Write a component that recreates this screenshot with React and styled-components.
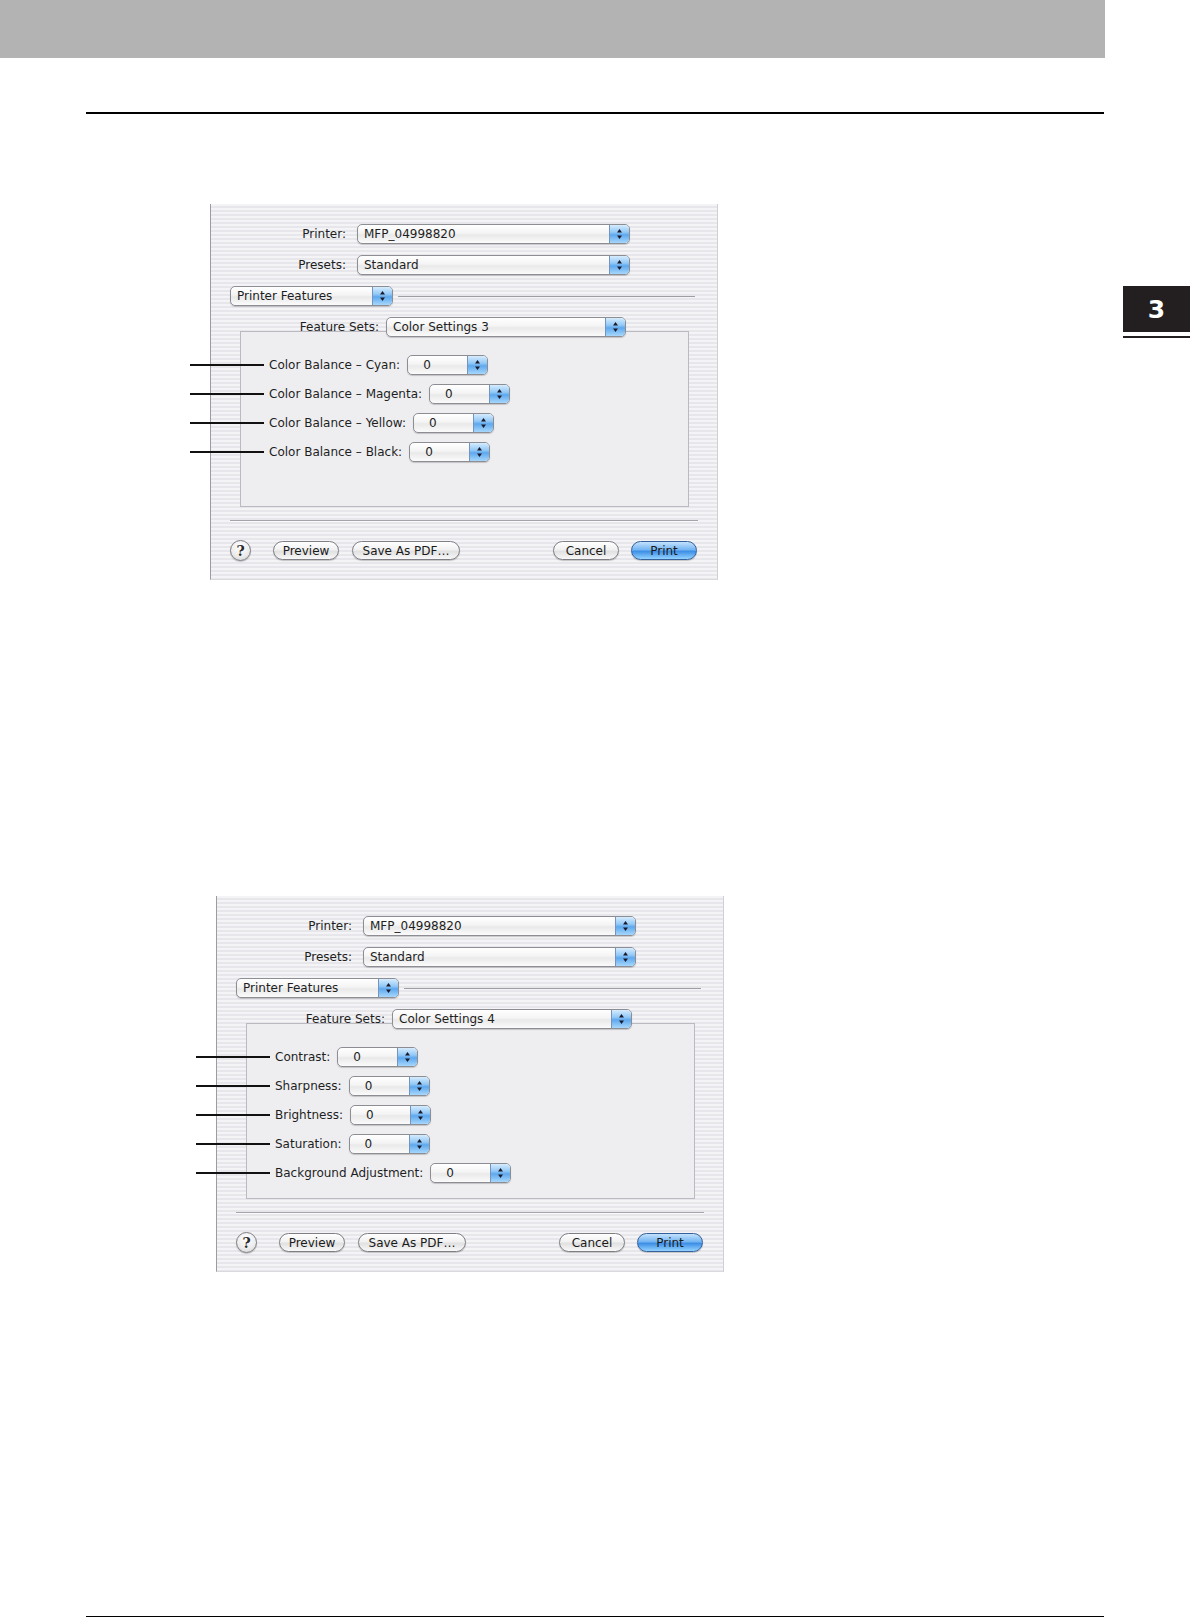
import React from 'react';
import styled, { createGlobalStyle } from 'styled-components';

const GlobalStyle = createGlobalStyle`
  html, body {
    margin: 0;
    padding: 0;
    background: #ffffff;
  }
  body {
    font-family: 'DejaVu Sans', 'Liberation Sans', sans-serif;
  }
`;

const Page = styled.div`
  width: 1190px;
  height: 1617px;
  display: grid;
  grid-template-columns: 1105px 1fr;
  overflow: hidden;
`;

const Content = styled.div`
  display: flex;
  flex-direction: column;
`;

const HeaderBand = styled.div`
  height: 58px;
  background-color: #b3b3b3;
`;

const Rule = styled.div`
  margin-top: ${p => p.$top}px;
  margin-left: 86px;
  width: 1018px;
  height: 2px;
  background-color: #000;
`;

const Side = styled.div`
  padding-top: 286px;
  padding-left: 18px;
`;

const ChapterTab = styled.div`
  width: 67px;
  height: 46px;
  background-color: #231f20;
  color: #fff;
  display: flex;
  align-items: center;
  justify-content: center;
  font-family: 'DejaVu Sans', sans-serif;
  font-weight: bold;
  font-size: 25px;
`;

const ChapterLine = styled.div`
  margin-top: 4px;
  width: 67px;
  height: 2px;
  background-color: #231f20;
`;

const Dialog = styled.div`
  margin-top: ${p => p.$top}px;
  margin-left: ${p => p.$left}px;
  width: 508px;
  height: 376px;
  box-sizing: border-box;
  padding-top: 20px;
  display: flex;
  flex-direction: column;
  background: repeating-linear-gradient(to bottom, #f4f4f6 0px, #f4f4f6 2px, #e6e6eb 2px, #e6e6eb 4px);
  background-attachment: fixed;
  border-left: 1px solid #9b9ba4;
  border-right: 1px solid #cfcfd5;
  border-bottom: 1px solid #d9d9de;
  font-size: 12px;
  color: #1e1e1e;
`;

const FieldRow = styled.div`
  display: flex;
  align-items: center;
  gap: ${p => p.$gap || 11}px;
  margin-top: ${p => p.$top || 0}px;
  position: relative;
  z-index: 1;
`;

const FieldLabel = styled.span`
  width: ${p => p.$w}px;
  text-align: right;
  white-space: nowrap;
`;

const SectionRow = styled.div`
  display: flex;
  align-items: center;
  margin-top: 11px;
  padding-left: 19px;
  padding-right: 22px;
`;

const Separator = styled.div`
  flex: 1;
  height: 1px;
  margin-left: 5px;
  background-color: #9d9da2;
`;

const Popup = styled.div`
  display: flex;
  width: ${p => p.$w}px;
  height: 20px;
  box-sizing: border-box;
  border: 1px solid #8d8d94;
  border-radius: 5px;
  overflow: hidden;
  background: linear-gradient(to bottom, #ffffff 0%, #f4f4f4 45%, #e9e9e9 55%, #fbfbfb 100%);
  box-shadow: 0 1px 1px rgba(0, 0, 0, 0.18);
`;

const PopupText = styled.span`
  flex: 1;
  padding-left: ${p => p.$pad || 6}px;
  line-height: 18px;
  white-space: nowrap;
`;

const Stepper = styled.span`
  width: 19px;
  display: flex;
  align-items: center;
  justify-content: center;
  border-left: 1px solid #7594bd;
  background: linear-gradient(to bottom, #d6ecfe 0%, #92c8f6 40%, #5ea8ee 55%, #a7d7fc 100%);
`;

const GroupBox = styled.div`
  margin-top: -6px;
  margin-left: 29px;
  width: 449px;
  height: 176px;
  box-sizing: border-box;
  padding: 23px 0 0 28px;
  display: flex;
  flex-direction: column;
  gap: 9px;
  background-color: #eeeef1;
  border: 1px solid #babac0;
`;

const OptionRow = styled.div`
  position: relative;
  display: flex;
  align-items: center;
  gap: 7px;
  height: 20px;
  white-space: nowrap;

  &::before {
    content: '';
    position: absolute;
    left: -79px;
    top: 9px;
    width: 74px;
    height: 2px;
    background-color: #111;
  }
`;

const BottomSeparator = styled.div`
  margin-top: 13px;
  margin-left: 19px;
  width: 468px;
  height: 1px;
  background-color: #a4a4aa;
  box-shadow: 0 1px 0 #fbfbfb;
`;

const ButtonBar = styled.div`
  display: flex;
  align-items: center;
  margin-top: 19px;
  padding-left: 19px;
  padding-right: 20px;
`;

const Spacer = styled.div`
  flex: 1;
`;

const HelpButton = styled.div`
  width: 21px;
  height: 21px;
  box-sizing: border-box;
  border-radius: 50%;
  border: 1px solid #7c7c82;
  background: radial-gradient(circle at 50% 30%, #ffffff 0%, #ececec 60%, #cfcfcf 100%);
  box-shadow: 0 1px 1px rgba(0, 0, 0, 0.2);
  display: flex;
  align-items: center;
  justify-content: center;
  font-family: 'DejaVu Serif', serif;
  font-weight: bold;
  font-size: 14px;
  color: #2a2a2a;
  margin-right: 22px;
`;

const PushButton = styled.div`
  width: ${p => p.$w}px;
  height: 19px;
  box-sizing: border-box;
  margin-right: ${p => p.$mr || 0}px;
  border-radius: 10px;
  border: 1px solid ${p => (p.$primary ? '#35609c' : '#7e7e84')};
  background: ${p =>
    p.$primary
      ? 'linear-gradient(to bottom, #c4e2fc 0%, #74b5f2 45%, #3d8ee6 55%, #93d3ff 100%)'
      : 'linear-gradient(to bottom, #ffffff 0%, #f1f1f1 45%, #e1e1e1 55%, #f8f8f8 100%)'};
  box-shadow: 0 1px 1px rgba(0, 0, 0, 0.2);
  display: flex;
  align-items: center;
  justify-content: center;
  font-size: 12px;
  color: #1a1a1a;
`;

const StepArrows = () => (
  <svg width="7" height="12" viewBox="0 0 7 12">
    <path d="M3.5 1 L6 4.5 L1 4.5 Z" fill="#1a1a2a" />
    <path d="M3.5 11 L6 7.5 L1 7.5 Z" fill="#1a1a2a" />
  </svg>
);

const Select = ({ width, pad, children }) => (
  <Popup $w={width}>
    <PopupText $pad={pad}>{children}</PopupText>
    <Stepper>
      <StepArrows />
    </Stepper>
  </Popup>
);

const PrintDialog = ({ top, left, featureSet, options }) => (
  <Dialog $top={top} $left={left}>
    <FieldRow>
      <FieldLabel $w={135}>Printer:</FieldLabel>
      <Select width={273}>MFP_04998820</Select>
    </FieldRow>
    <FieldRow $top={11}>
      <FieldLabel $w={135}>Presets:</FieldLabel>
      <Select width={273}>Standard</Select>
    </FieldRow>
    <SectionRow>
      <Select width={163}>Printer Features</Select>
      <Separator />
    </SectionRow>
    <FieldRow $top={11} $gap={7}>
      <FieldLabel $w={168}>Feature Sets:</FieldLabel>
      <Select width={240}>{featureSet}</Select>
    </FieldRow>
    <GroupBox>
      {options.map(opt => (
        <OptionRow key={opt.label}>
          <span>{opt.label}</span>
          <Select width={81} pad={15}>0</Select>
        </OptionRow>
      ))}
    </GroupBox>
    <BottomSeparator />
    <ButtonBar>
      <HelpButton>?</HelpButton>
      <PushButton $w={66} $mr={13}>Preview</PushButton>
      <PushButton $w={108}>Save As PDF…</PushButton>
      <Spacer />
      <PushButton $w={66} $mr={12}>Cancel</PushButton>
      <PushButton $w={66} $primary>Print</PushButton>
    </ButtonBar>
  </Dialog>
);

const colorOptions = [
  { label: 'Color Balance – Cyan:' },
  { label: 'Color Balance – Magenta:' },
  { label: 'Color Balance – Yellow:' },
  { label: 'Color Balance – Black:' },
];

const imageOptions = [
  { label: 'Contrast:' },
  { label: 'Sharpness:' },
  { label: 'Brightness:' },
  { label: 'Saturation:' },
  { label: 'Background Adjustment:' },
];

const App = () => (
  <>
    <GlobalStyle />
    <Page>
      <Content>
        <HeaderBand />
        <Rule $top={54} />
        <PrintDialog top={90} left={210} featureSet="Color Settings 3" options={colorOptions} />
        <PrintDialog top={316} left={216} featureSet="Color Settings 4" options={imageOptions} />
        <Rule $top={344} />
      </Content>
      <Side>
        <ChapterTab>3</ChapterTab>
        <ChapterLine />
      </Side>
    </Page>
  </>
);

export default App;
